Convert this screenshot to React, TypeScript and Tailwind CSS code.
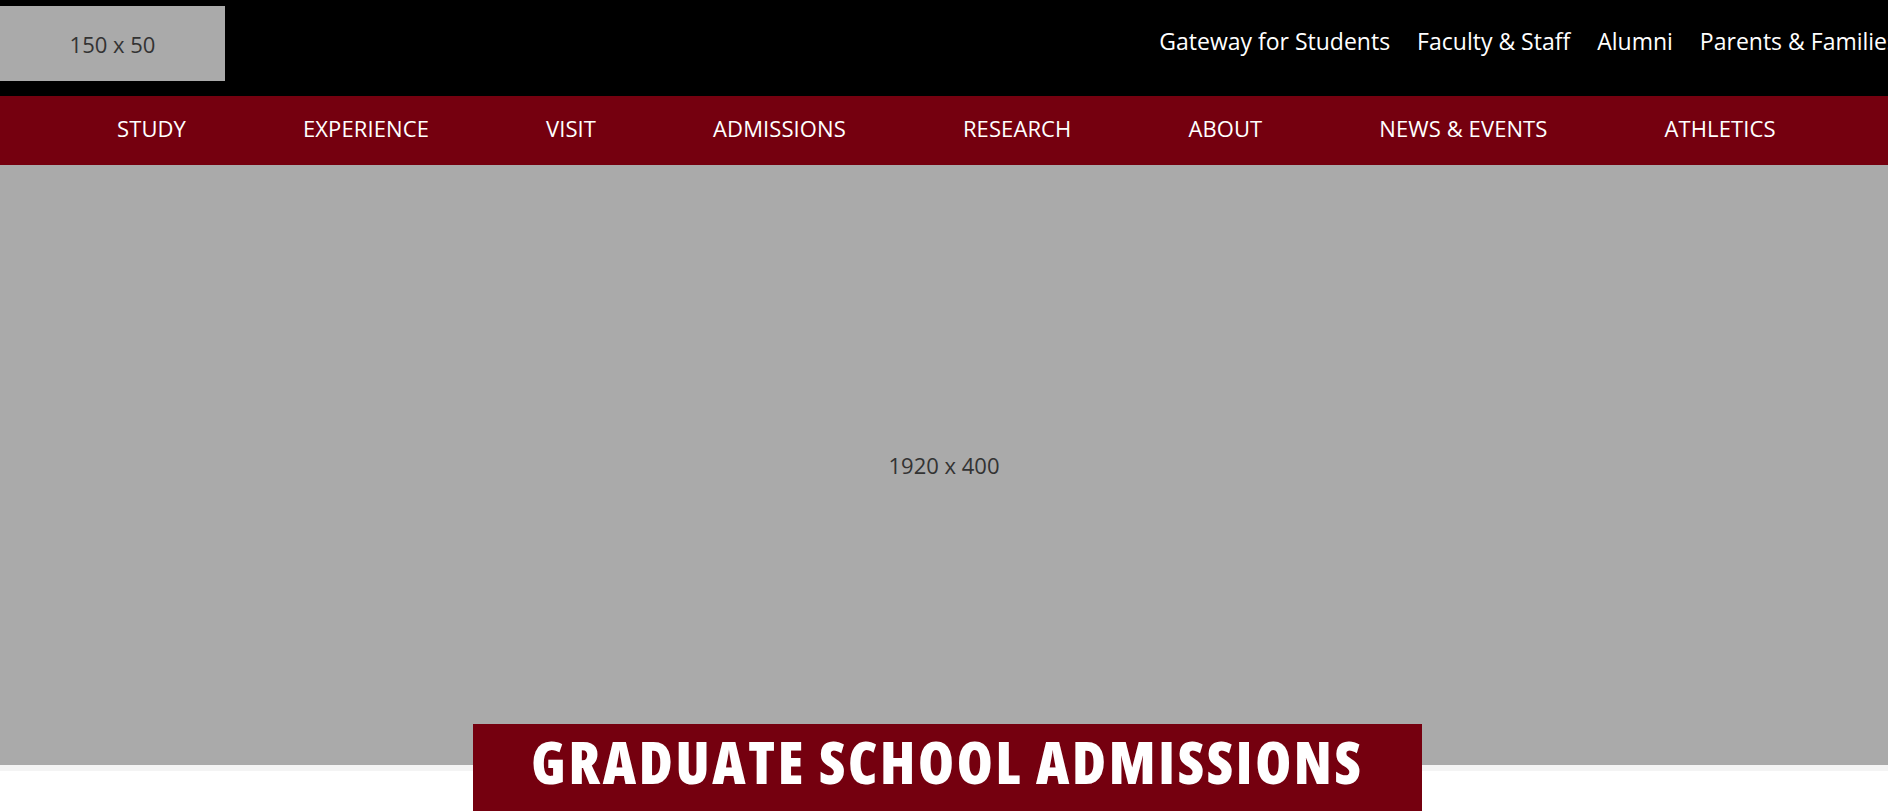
const topLinks = ["Gateway for Students", "Faculty & Staff", "Alumni", "Parents & Families"];

const navItems = ["STUDY", "EXPERIENCE", "VISIT", "ADMISSIONS", "RESEARCH", "ABOUT", "NEWS & EVENTS", "ATHLETICS"];

export default function App() {
  return (
    <div className="w-full min-h-[811px] overflow-hidden bg-white font-['Open_Sans',sans-serif]">
      {/* Top bar */}
      <header className="flex h-[96px] w-[1920px] items-start justify-between bg-black pr-[22px]">
        <div className="mt-[6px] flex h-[75px] w-[225px] items-center justify-center bg-[#aaaaaa] text-[22px] leading-[30px] text-[#333333]">
          150 x 50
        </div>
        <ul className="flex gap-[27px] pt-[26px] text-[23px] leading-[30px] text-white">
          {topLinks.map((l) => (
            <li key={l} className="whitespace-nowrap">
              <a href="#">{l}</a>
            </li>
          ))}
        </ul>
      </header>

      {/* Main nav */}
      <nav className="flex h-[69px] gap-[117px] bg-[#75000f] pl-[117px] pt-[17px] text-[22px] leading-[30px] tracking-[0.1px] text-white">
        {navItems.map((n) => (
          <a key={n} href="#" className="whitespace-nowrap">
            {n}
          </a>
        ))}
      </nav>

      {/* Hero */}
      <div className="flex h-[600px] items-center justify-center bg-[#aaaaaa] text-[22px] text-[#333333]">
        1920 x 400
      </div>
      <div className="h-[6px] bg-[#f4f4f4]" />

      {/* Page title */}
      <div className="relative -mt-[47px] flex justify-center pl-[7px]">
        <div className="w-[949px] bg-[#75000f] pb-[24px] pt-[9px] text-center">
          <h1 className="font-stretch-condensed text-[58px] font-extrabold leading-none tracking-[2.7px] text-white">
            GRADUATE SCHOOL ADMISSIONS
          </h1>
        </div>
      </div>
    </div>
  );
}
